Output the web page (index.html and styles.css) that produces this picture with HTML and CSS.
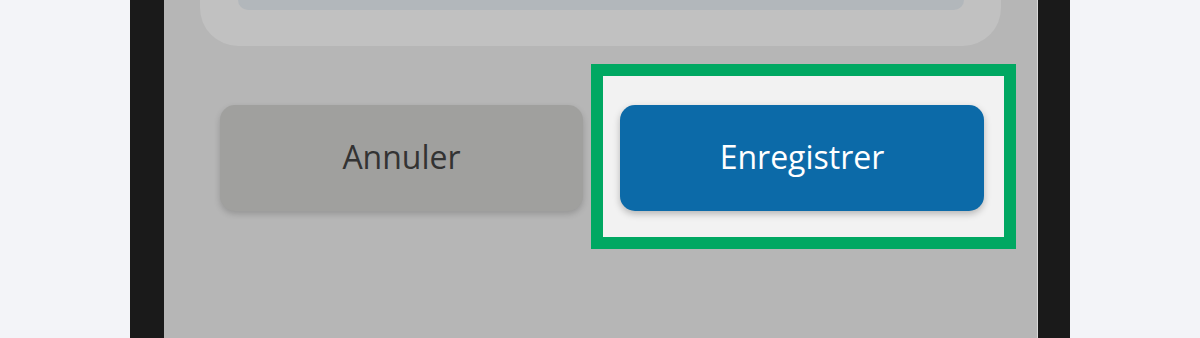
FILE: index.html
```html
<!DOCTYPE html>
<html lang="fr">
<head>
<meta charset="utf-8">
<link rel="stylesheet" href="styles.css">
</head>
<body>
<div class="phone">
  <div class="screen">
    <div class="card"><div class="card-inner"></div></div>
    <div class="actions">
      <button class="btn btn-cancel">Annuler</button>
      <div class="highlight">
        <button class="btn btn-save">Enregistrer</button>
      </div>
    </div>
  </div>
</div>
</body>
</html>
```
FILE: styles.css
```css
* { box-sizing: border-box; }
html, body { margin: 0; padding: 0; }
body {
  background: #f3f4f8;
  width: 1200px;
  height: 338px;
  overflow: hidden;
  font-family: "Open Sans", "Noto Sans", sans-serif;
}
.phone {
  margin-left: 130px;
  width: 940px;
  height: 338px;
  background: #1a1a1a;
  padding: 0 32px 0 34px;
}
.screen {
  height: 338px;
  background: #b6b6b6;
  border-right: 1px solid #d8d8d8;
}
.card {
  height: 46px;
  margin: 0 36px;
  background: #c1c1c1;
  border-radius: 0 0 38px 38px;
  padding: 0 37px 0 38px;
}
.card-inner {
  height: 10px;
  background: #b2b7bb;
  border-radius: 0 0 14px 14px;
}
.actions {
  display: flex;
  align-items: flex-start;
  margin-top: 18px;
  padding-left: 56px;
}
.btn {
  flex-shrink: 0;
  border: none;
  border-radius: 15px;
  height: 106px;
  font-family: inherit;
  font-size: 32px;
  display: flex;
  align-items: center;
  justify-content: center;
  padding: 0 0 4px 0;
}
.btn-cancel {
  margin-top: 41px;
  width: 363px;
  background: #a0a09e;
  color: #333333;
  box-shadow: 0 3px 6px rgba(0, 0, 0, 0.18);
}
.highlight {
  flex-shrink: 0;
  margin-left: 8px;
  border: 12px solid #00a862;
  background: #f2f2f2;
  padding: 29px 20px 26px 17px;
}
.btn-save {
  width: 364px;
  background: #0c6aa8;
  color: #ffffff;
  box-shadow: 0 3px 7px rgba(0, 0, 0, 0.25);
}
```
